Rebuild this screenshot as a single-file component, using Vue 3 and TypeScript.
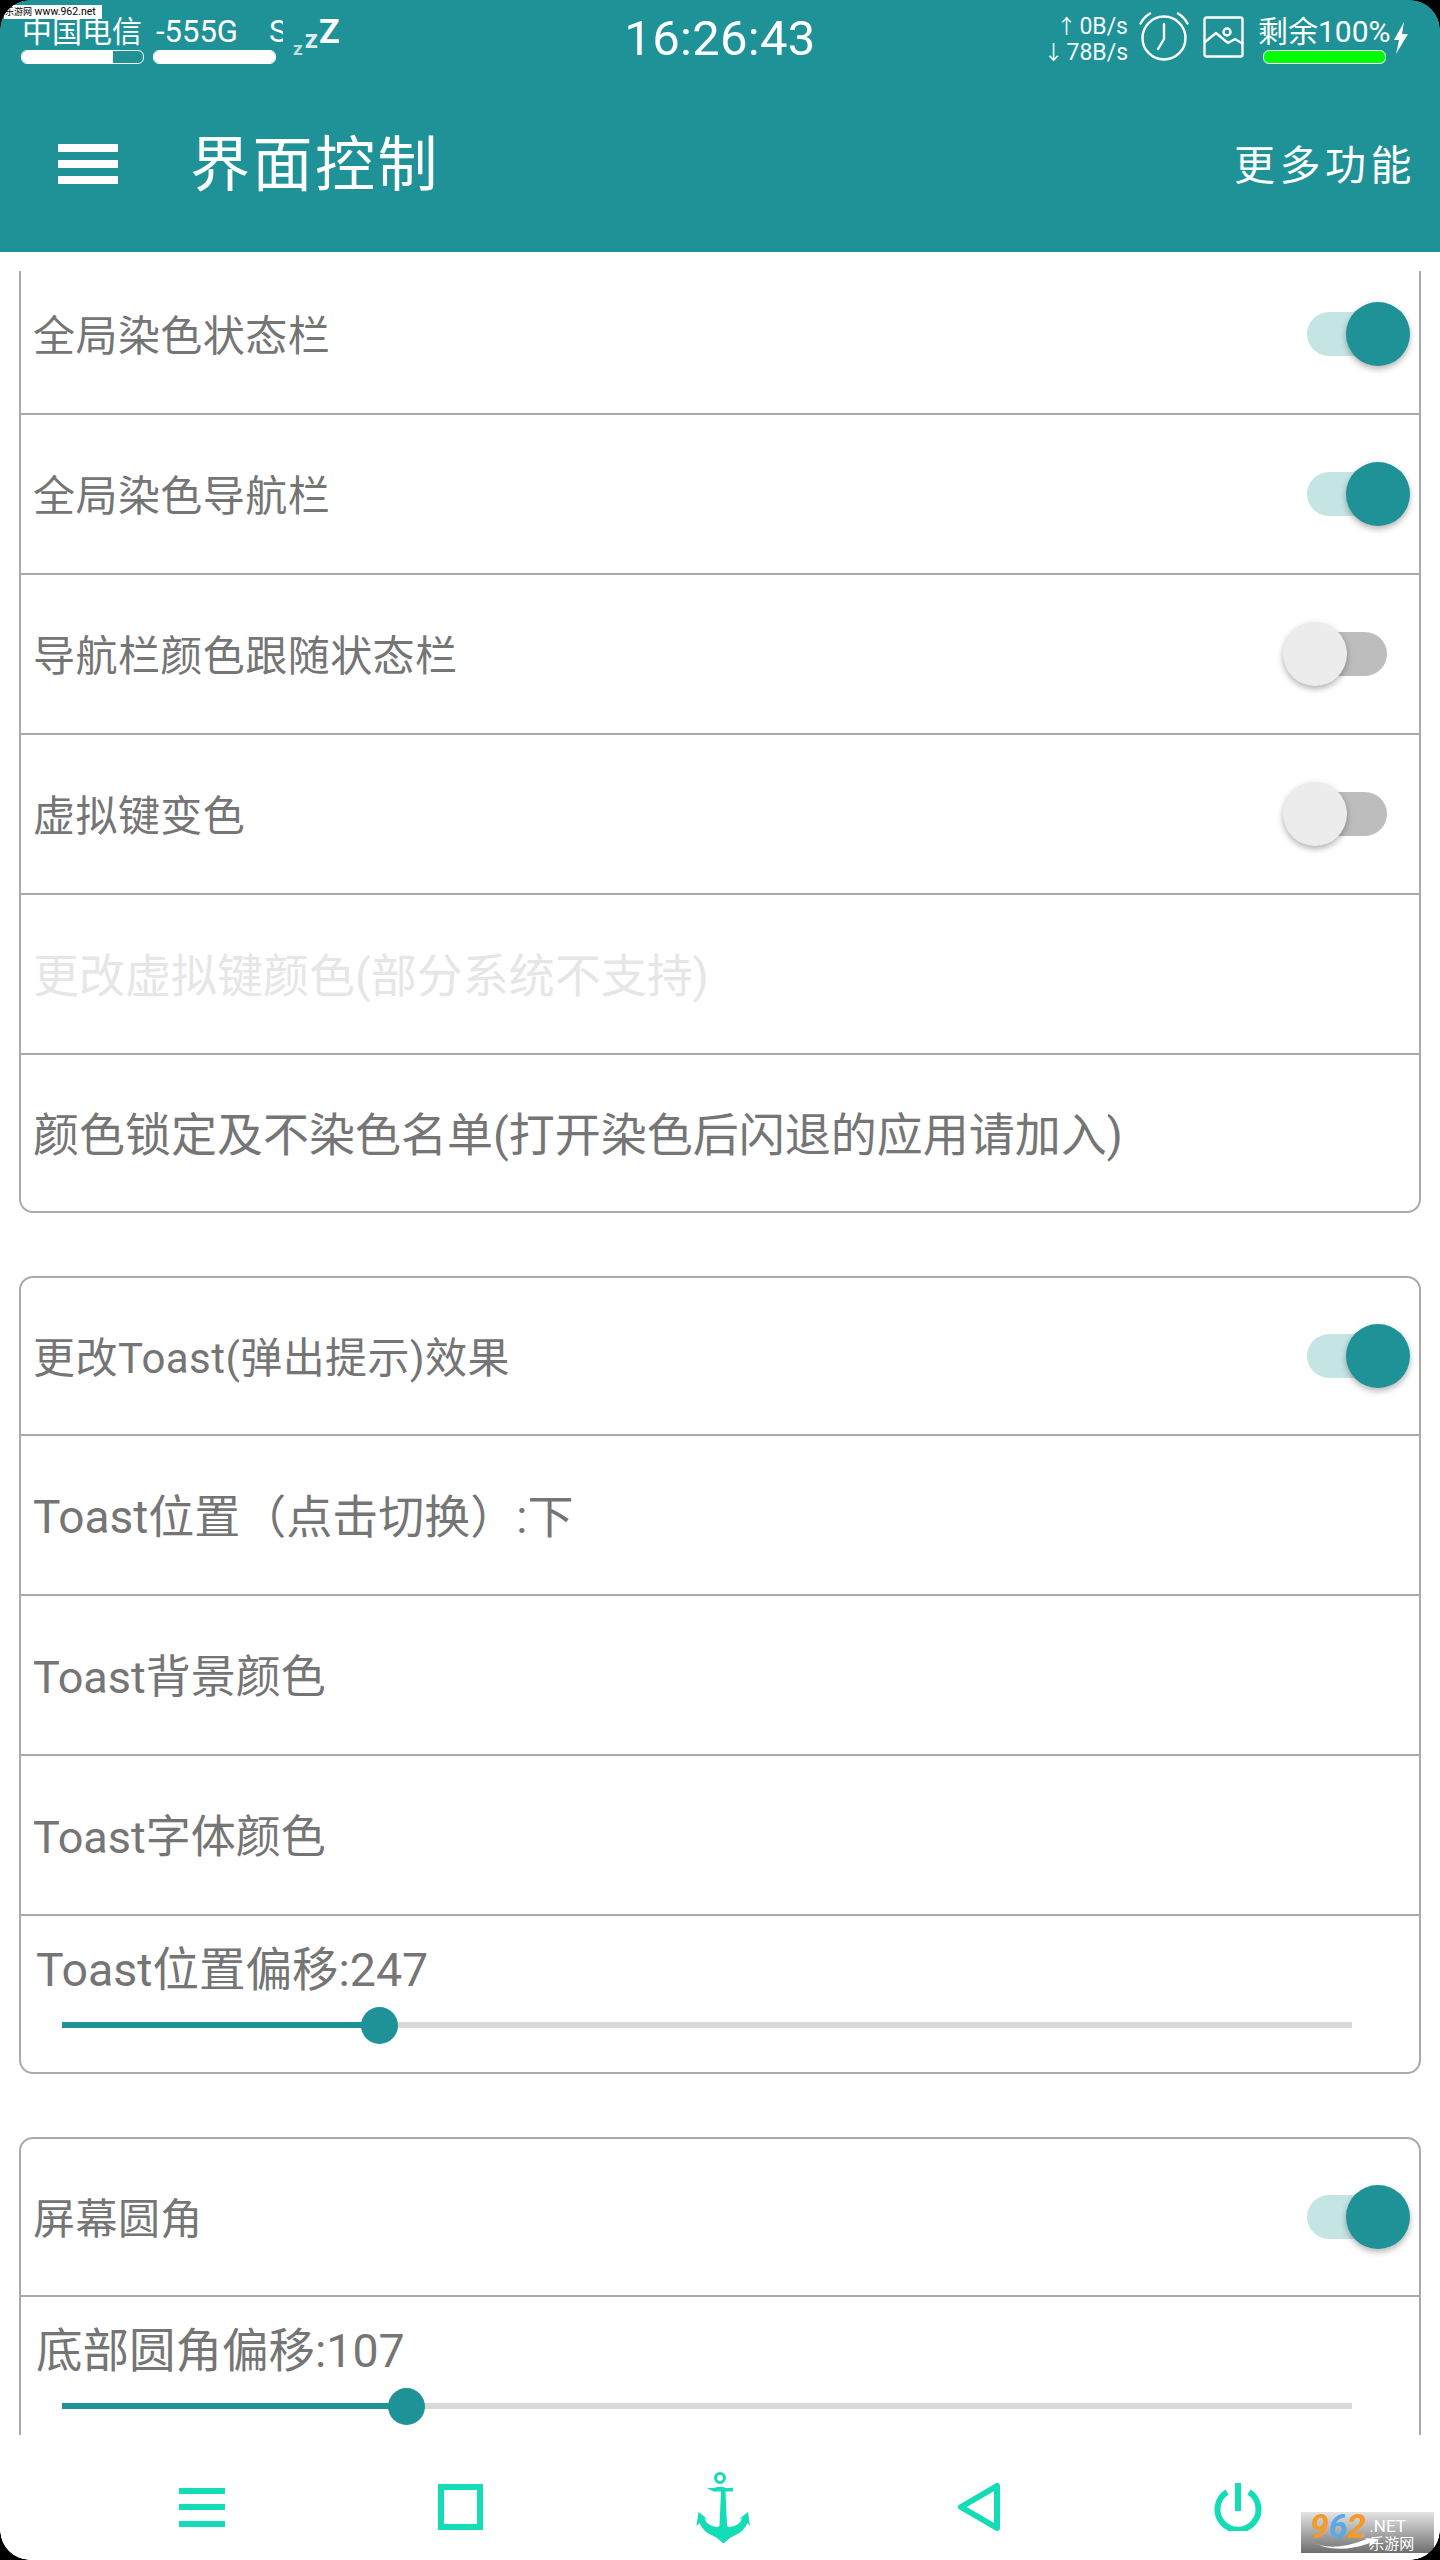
<script setup lang="ts">
type Row = {
  label: string
  toggle?: boolean
  dim?: boolean
  size?: 'mid' | 'big' | 'wide'
  slider?: number
}

const cards: Row[][] = [
  [
    { label: '全局染色状态栏', toggle: true },
    { label: '全局染色导航栏', toggle: true },
    { label: '导航栏颜色跟随状态栏', toggle: false },
    { label: '虚拟键变色', toggle: false },
    { label: '更改虚拟键颜色(部分系统不支持)', dim: true, size: 'big' },
    { label: '颜色锁定及不染色名单(打开染色后闪退的应用请加入)', size: 'big' },
  ],
  [
    { label: '更改Toast(弹出提示)效果', toggle: true },
    { label: 'Toast位置（点击切换）:下', size: 'big' },
    { label: 'Toast背景颜色', size: 'mid' },
    { label: 'Toast字体颜色', size: 'mid' },
    { label: 'Toast位置偏移:247', slider: 24.65, size: 'wide' },
  ],
  [
    { label: '屏幕圆角', toggle: true },
    { label: '底部圆角偏移:107', slider: 26.75, size: 'wide' },
  ],
]
</script>

<template>
  <div class="phone">
    <header class="header">
      <div class="status">
        <div class="status-left">
          <div class="cell">
            <span class="cell-text">中国电信</span>
            <div class="bar"><div class="bar-fill sim"></div></div>
          </div>
          <div class="cell">
            <span class="cell-text net"><span>-555G</span><span>S</span></span>
            <div class="bar"><div class="bar-fill"></div></div>
          </div>
          <div class="zzz"><span class="z1">z</span><span class="z2">z</span><span class="z3">Z</span></div>
        </div>
        <div class="clock">16:26:43</div>
        <div class="status-right">
          <div class="speed">
            <div><span class="arrow">↑</span>0B/s</div>
            <div><span class="arrow">↓</span>78B/s</div>
          </div>
          <svg class="alarm" width="50" height="50" viewBox="0 0 50 50" fill="none" stroke="#fff" stroke-width="2.4" stroke-linecap="round">
            <circle cx="25" cy="27" r="21.5" />
            <path d="M25 13v15l-6 10M1.500 12.500 Q5 6 11 2.500M48.500 12.500 Q45 6 39 2.500" />
          </svg>
          <svg class="picture" width="42" height="42" viewBox="0 0 42 42" fill="none" stroke="#fff" stroke-width="2.400" stroke-linejoin="round">
            <rect x="1.500" y="1.500" width="38" height="39" rx="2" />
            <circle cx="24" cy="16" r="3.500" />
            <path d="M2 26l11-9 12 10 7-4 8 5" />
          </svg>
          <div class="cell batt">
            <span class="cell-text batt-text">剩余100%</span>
            <div class="bar green"></div>
          </div>
          <svg class="bolt" width="14" height="32" viewBox="0 0 14 32"><path d="M10 0 0 18h5L2 32l12-20H8z" fill="#fff" /></svg>
        </div>
      </div>
      <div class="toolbar">
        <div class="menu"><i></i><i></i><i></i></div>
        <h1 class="title">界面控制</h1>
        <span class="more">更多功能</span>
      </div>
    </header>

    <main class="scroll">
      <div class="list">
        <section v-for="(card, c) in cards" :key="c" class="card">
          <div
            v-for="row in card"
            :key="row.label"
            class="row"
            :class="{ 'slider-row': row.slider !== undefined }"
          >
            <span class="label" :class="[row.size, { dim: row.dim }]">{{ row.label }}</span>
            <div v-if="row.toggle !== undefined" class="switch" :class="{ on: row.toggle }">
              <div class="knob"></div>
            </div>
            <div v-if="row.slider !== undefined" class="track">
              <div class="fill" :style="{ width: row.slider + '%' }">
                <div class="thumb"></div>
              </div>
            </div>
          </div>
        </section>
      </div>
    </main>

    <nav class="nav">
      <div class="nav-item">
        <div class="nav-menu"><i></i><i></i><i></i></div>
      </div>
      <div class="nav-item"><div class="nav-square"></div></div>
      <div class="nav-item">
        <svg width="62" height="72" viewBox="0 0 62 72" fill="#13dcb7">
          <circle cx="31" cy="7" r="4.500" fill="none" stroke="#13dcb7" stroke-width="3" />
          <path d="M18 17h7l3-1h6l3 1h7v3.500h-7.500l1.500 33.500q0 2 3 2 4 0 8-3 3-2 4-6l-3 1 9-7 2 14-2.500-3q-4 9-12 12-7 3-12 9-5-6-12-9-8-3-12-12l-3 3 2-14 9 7-3-1q1 4 4 6 4 3 8 3 3 0 3-2l1.500-33.500h-7.500z" />
        </svg>
      </div>
      <div class="nav-item">
        <svg width="44" height="50" viewBox="0 0 44 50" fill="none" stroke="#13dcb7" stroke-width="6" stroke-linejoin="round">
          <path d="M40 4v42L4 25z" />
        </svg>
      </div>
      <div class="nav-item">
        <svg width="48" height="48" viewBox="0 0 48 48" fill="none" stroke="#13dcb7" stroke-width="6">
          <path d="M13 9A20.500 20.500 0 1 0 35 9" />
          <path d="M24 0v28" />
        </svg>
      </div>
    </nav>

    <!-- watermarks and screen corners lie over the page -->
    <div class="mark-top"><b>乐游网</b> www.962.net</div>
    <div class="mark-bottom">
      <span class="m-962"><em class="m-o">9</em><em class="m-b">6</em><em class="m-o">2</em></span>
      <span class="m-side"><span>.NET</span><span class="m-cn">乐游网</span></span>
      <svg class="m-swoosh" width="70" height="14" viewBox="0 0 70 14"><path d="M0 2q20 14 58-1l-3-1 15 1-10 8 1-4Q25 18 0 2z" fill="#fff" /></svg>
    </div>
    <div class="corner tl"></div>
    <div class="corner tr"></div>
    <div class="corner bl"></div>
    <div class="corner br"></div>
  </div>
</template>

<style scoped>
.phone {
  position: relative;
  width: 1440px;
  height: 2560px;
  display: flex;
  flex-direction: column;
  overflow: hidden;
  background: #fff;
  font-family: Roboto, "Noto Sans CJK SC", sans-serif;
}

.header {
  height: 252px;
  flex: none;
  background: #1e9296;
  color: #fff;
  display: flex;
  flex-direction: column;
}

.status {
  height: 68px;
  display: grid;
  grid-template-columns: 1fr auto 1fr;
  padding: 0 21px;
}

.status-left,
.status-right {
  display: flex;
}

.status-right {
  justify-content: flex-end;
  padding-right: 11px;
}

.cell {
  width: 123px;
  margin-right: 9px;
  display: flex;
  flex-direction: column;
  padding-top: 13px;
}

.cell-text {
  height: 37px;
  line-height: 37px;
  font-size: 30px;
  white-space: nowrap;
  padding-left: 1px;
}

.net {
  display: flex;
  gap: 31px;
  width: 127px;
  overflow: hidden;
  padding-left: 3px;
  font-size: 31px;
}

.bar {
  height: 12px;
  border: 1px solid #fff;
  border-radius: 6px;
  overflow: hidden;
}

.bar-fill {
  height: 100%;
  background: #fff;
}

.bar-fill.sim {
  width: 75%;
}

.green {
  background: #00ff00;
  border-width: 1.500px;
  margin: 0 5px;
}

.zzz {
  display: flex;
  font-weight: 700;
  line-height: 1;
  margin-left: 8px;
}

.z1 {
  font-size: 19px;
  margin-top: 39px;
  opacity: 0.7;
}

.z2 {
  font-size: 26px;
  margin: 26px 0 0 2px;
  opacity: 0.85;
}

.z3 {
  font-size: 34px;
  margin: 14px 0 0 1px;
}

.clock {
  font-size: 49px;
  line-height: 78px;
  letter-spacing: 0.3px;
}

.speed {
  font-size: 23px;
  line-height: 25px;
  text-align: right;
  padding-top: 14px;
  margin-right: 11px;
  opacity: 0.95;
}

.arrow {
  font-size: 20px;
  margin-right: 3px;
}

.alarm {
  margin: 11px 14px 0 0;
}

.picture {
  margin: 16px 13px 0 0;
}

.batt {
  width: 133px;
  margin-right: 3px;
}

.batt-text {
  padding-left: 0;
}

.bolt {
  margin-top: 22px;
}

.toolbar {
  flex: 1;
  display: flex;
  align-items: center;
  padding: 7px 24px 0 58px;
}

.menu {
  width: 60px;
  height: 40px;
  display: flex;
  flex-direction: column;
  justify-content: space-between;
}

.menu i {
  display: block;
  height: 8px;
  background: #fff;
}

.title {
  margin: 0 0 0 72px;
  padding-top: 4px;
  font-size: 60px;
  font-weight: 400;
  letter-spacing: 2.500px;
  line-height: 70px;
}

.more {
  margin-left: auto;
  padding-bottom: 3px;
  font-size: 41px;
  font-weight: 400;
  letter-spacing: 4.500px;
}

.scroll {
  flex: 1;
  min-height: 0;
  margin-top: 19px;
  margin-bottom: 2px;
  overflow: hidden;
}

.list {
  margin-top: -18px;
  padding: 0 19px;
  display: flex;
  flex-direction: column;
  gap: 63px;
}

.card {
  border: 2px solid #aaa;
  border-radius: 14px;
}

.row {
  height: 158px;
  box-sizing: content-box;
  display: flex;
  align-items: center;
  justify-content: space-between;
  padding: 0 10px 0 12px;
  border-bottom: 2px solid #aaa;
}

.row:last-child {
  border-bottom: none;
  height: 156px;
}

.card + .card .row:first-child {
  height: 156px;
}

.label {
  font-size: 42px;
  letter-spacing: 0.450px;
  color: #757575;
  white-space: nowrap;
  padding-bottom: 4px;
}

.label.mid {
  font-size: 45px;
  letter-spacing: 0;
}

.label.big {
  font-size: 46px;
  letter-spacing: 0;
}

.label.wide {
  font-size: 46.500px;
  letter-spacing: 0;
}

.dim {
  color: #e6e6e6;
}

.switch {
  position: relative;
  width: 80px;
  height: 44px;
  margin-right: 22px;
  border-radius: 22px;
  background: #bdbdbd;
}

.switch.on {
  width: 93px;
  margin-right: 9px;
  background: #c5e5e5;
}

.knob {
  position: absolute;
  left: -24px;
  top: -10px;
  width: 64px;
  height: 64px;
  border-radius: 50%;
  background: #ececec;
  box-shadow: 0 3px 6px rgba(0, 0, 0, 0.3);
}

.on .knob {
  left: auto;
  right: -10px;
  background: #1e9296;
}

.slider-row {
  display: block;
  padding: 0;
}

.slider-row .label {
  display: block;
  line-height: 56px;
  padding: 26px 0 0 15px;
}

.track {
  position: relative;
  height: 6px;
  margin: 24px 0 0 41px;
  width: 1290px;
  background: #d9d9d9;
}

.fill {
  position: relative;
  height: 100%;
  background: #1e9296;
}

.thumb {
  position: absolute;
  right: -18px;
  top: -15px;
  width: 37px;
  height: 37px;
  border-radius: 50%;
  background: #1e9296;
}

.nav {
  flex: none;
  height: 123px;
  box-sizing: border-box;
  padding: 17px 72px 0;
  display: grid;
  grid-template-columns: repeat(5, 1fr);
  background: #fff;
}

.nav-item {
  display: flex;
  align-items: center;
  justify-content: center;
}

.nav-menu {
  width: 46px;
  height: 39px;
  display: flex;
  flex-direction: column;
  justify-content: space-between;
}

.nav-menu i {
  display: block;
  height: 6px;
  background: #13dcb7;
}

.nav-square {
  width: 45px;
  height: 46px;
  box-sizing: border-box;
  border: 6px solid #13dcb7;
}

.mark-top {
  position: absolute;
  left: 4px;
  top: 5px;
  width: 98px;
  height: 14px;
  padding-left: 1px;
  box-sizing: border-box;
  background: #fff;
  color: #000;
  font-size: 10.500px;
  line-height: 14px;
  white-space: nowrap;
  overflow: hidden;
}

.mark-top b {
  font-weight: 400;
  font-size: 9px;
}

.mark-bottom {
  position: absolute;
  left: 1301px;
  top: 2512px;
  width: 133px;
  height: 41px;
  display: flex;
  gap: 4px;
  padding-left: 9px;
  box-sizing: border-box;
  background: linear-gradient(#e4e4e4, #6e6e6e);
  color: #fff;
}

.m-962 {
  font-size: 34px;
  font-weight: 700;
  line-height: 28px;
  letter-spacing: -0.500px;
}

.m-o {
  color: #f39a2b;
}

.m-b {
  color: #5aa9e6;
}

.m-side {
  display: flex;
  flex-direction: column;
  font-size: 17px;
  line-height: 18px;
  padding-top: 5px;
}

.m-cn {
  font-size: 15px;
}

.m-swoosh {
  position: absolute;
  left: 8px;
  top: 26px;
}

.corner {
  position: absolute;
  width: 30px;
  height: 30px;
}

.tl {
  left: 0;
  top: 0;
  background: radial-gradient(circle at 30px 30px, transparent 29.500px, #000 30px);
}

.tr {
  right: 0;
  top: 0;
  background: radial-gradient(circle at 0 30px, transparent 29.500px, #000 30px);
}

.bl {
  left: 0;
  bottom: 0;
  background: radial-gradient(circle at 30px 0, transparent 29.500px, #000 30px);
}

.br {
  right: 0;
  bottom: 0;
  background: radial-gradient(circle at 0 0, transparent 29.500px, #000 30px);
}
</style>
